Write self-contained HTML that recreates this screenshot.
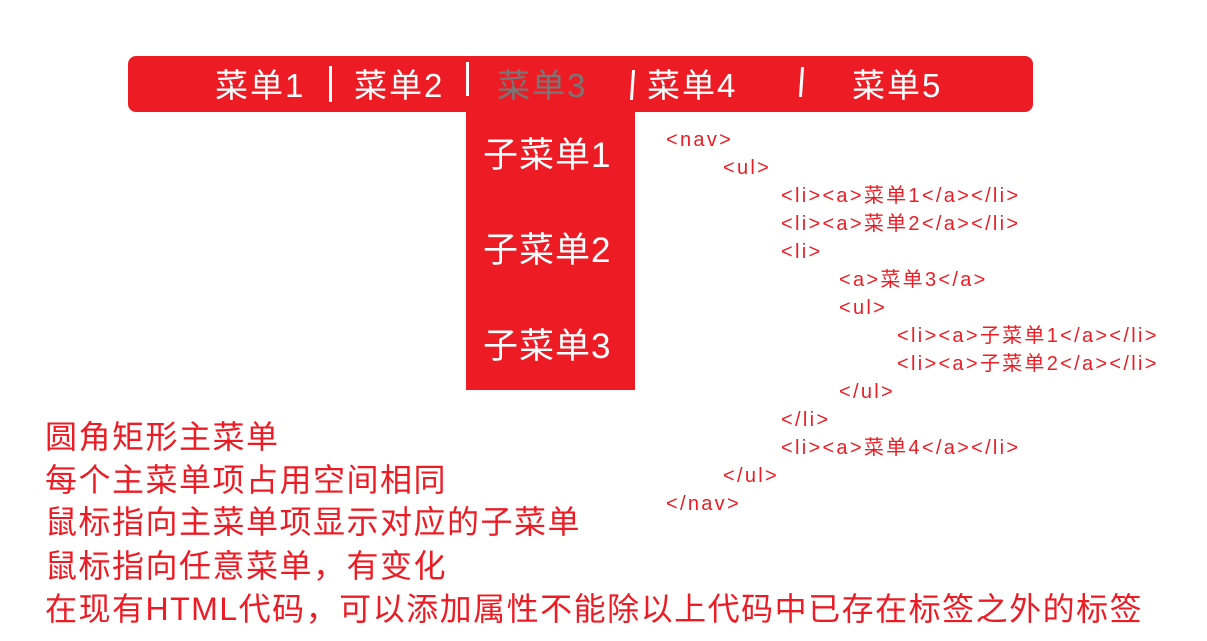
<!DOCTYPE html>
<html><head><meta charset="utf-8"><style>
body{margin:0;width:1207px;height:641px;background:#fff;position:relative;overflow:hidden;font-family:"Liberation Sans","Noto Sans CJK SC",sans-serif;}
.nav{position:absolute;left:128px;top:56px;width:905px;height:56px;background:#ed1c24;border-radius:8px;}
.t{position:absolute;color:#fff;font-size:33px;line-height:40px;white-space:nowrap;letter-spacing:2px;}
.sep{position:absolute;width:3px;background:#fff;}
.dd{position:absolute;left:466px;top:112px;width:169px;height:278px;background:#ed1c24;}
.s{position:absolute;left:483px;color:#fff;font-size:35px;line-height:40px;letter-spacing:1px;}
.c{position:absolute;color:#ed1c24;font-size:20px;line-height:22px;white-space:nowrap;letter-spacing:2.3px;}
.b{position:absolute;left:45px;color:#ed1c24;font-size:32px;line-height:36px;white-space:nowrap;letter-spacing:1.5px;}
</style></head><body>
<div class="nav"></div>
<div class="t" style="left:215px;top:66px">菜单1</div>
<div class="sep" style="left:329px;top:66px;height:36px"></div>
<div class="t" style="left:354px;top:66px">菜单2</div>
<div class="sep" style="left:466px;top:62px;height:34px"></div>
<div class="t" style="left:497px;top:66px;color:#777">菜单3</div>
<div class="sep" style="left:631px;top:70px;height:30px;transform:skewX(-4deg)"></div>
<div class="t" style="left:647px;top:66px">菜单4</div>
<div class="sep" style="left:800px;top:67px;height:30px;transform:skewX(-4deg)"></div>
<div class="t" style="left:852px;top:66px">菜单5</div>
<div class="dd"></div>
<div class="s" style="top:136px">子菜单1</div>
<div class="s" style="top:231px">子菜单2</div>
<div class="s" style="top:327px">子菜单3</div>
<div class="c" style="left:666px;top:129px">&lt;nav&gt;</div>
<div class="c" style="left:723px;top:157px">&lt;ul&gt;</div>
<div class="c" style="left:781px;top:185px">&lt;li&gt;&lt;a&gt;菜单1&lt;/a&gt;&lt;/li&gt;</div>
<div class="c" style="left:781px;top:213px">&lt;li&gt;&lt;a&gt;菜单2&lt;/a&gt;&lt;/li&gt;</div>
<div class="c" style="left:781px;top:241px">&lt;li&gt;</div>
<div class="c" style="left:839px;top:269px">&lt;a&gt;菜单3&lt;/a&gt;</div>
<div class="c" style="left:839px;top:297px">&lt;ul&gt;</div>
<div class="c" style="left:897px;top:325px">&lt;li&gt;&lt;a&gt;子菜单1&lt;/a&gt;&lt;/li&gt;</div>
<div class="c" style="left:897px;top:353px">&lt;li&gt;&lt;a&gt;子菜单2&lt;/a&gt;&lt;/li&gt;</div>
<div class="c" style="left:839px;top:381px">&lt;/ul&gt;</div>
<div class="c" style="left:781px;top:409px">&lt;/li&gt;</div>
<div class="c" style="left:781px;top:437px">&lt;li&gt;&lt;a&gt;菜单4&lt;/a&gt;&lt;/li&gt;</div>
<div class="c" style="left:723px;top:465px">&lt;/ul&gt;</div>
<div class="c" style="left:666px;top:493px">&lt;/nav&gt;</div>
<div class="b" style="top:419px">圆角矩形主菜单</div>
<div class="b" style="top:462px">每个主菜单项占用空间相同</div>
<div class="b" style="top:504px">鼠标指向主菜单项显示对应的子菜单</div>
<div class="b" style="top:548px">鼠标指向任意菜单，有变化</div>
<div class="b" style="top:591px">在现有HTML代码，可以添加属性不能除以上代码中已存在标签之外的标签</div>
</body></html>
